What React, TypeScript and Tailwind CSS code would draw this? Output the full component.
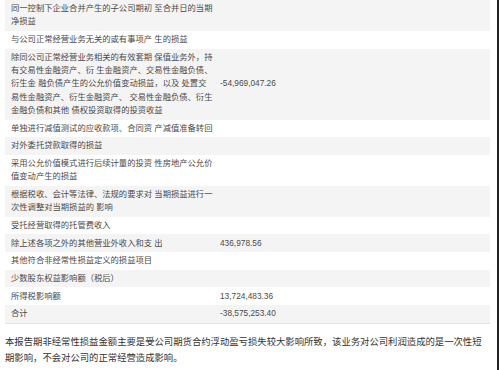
import React from "react";

type Row = { lines: string[]; value?: string; gray: boolean };

const rows: Row[] = [
  { lines: ["同一控制下企业合并产生的子公司期初 至合并日的当期", "净损益"], gray: true },
  { lines: ["与公司正常经营业务无关的或有事项产 生的损益"], gray: false },
  {
    lines: [
      "除同公司正常经营业务相关的有效套期 保值业务外，持",
      "有交易性金融资产、衍 生金融资产、交易性金融负债、",
      "衍生金 融负债产生的公允价值变动损益，以及 处置交",
      "易性金融资产、衍生金融资产、 交易性金融负债、衍生",
      "金融负债和其他 债权投资取得的投资收益",
    ],
    value: "-54,969,047.26",
    gray: true,
  },
  { lines: ["单独进行减值测试的应收款项、合同资 产减值准备转回"], gray: false },
  { lines: ["对外委托贷款取得的损益"], gray: true },
  { lines: ["采用公允价值模式进行后续计量的投资 性房地产公允价", "值变动产生的损益"], gray: false },
  { lines: ["根据税收、会计等法律、法规的要求对 当期损益进行一", "次性调整对当期损益的 影响"], gray: true },
  { lines: ["受托经营取得的托管费收入"], gray: false },
  { lines: ["除上述各项之外的其他营业外收入和支 出"], value: "436,978.56", gray: true },
  { lines: ["其他符合非经常性损益定义的损益项目"], gray: false },
  { lines: ["少数股东权益影响额（税后）"], gray: true },
  { lines: ["所得税影响额"], value: "13,724,483.36", gray: false },
  { lines: ["合计"], value: "-38,575,253.40", gray: true },
];

export default function App() {
  return (
    <div
      className="w-[500px] h-[370px] bg-white flex overflow-hidden"
      style={{ fontFamily: '"Liberation Sans", "Noto Sans CJK SC", sans-serif' }}
    >
      <div className="w-[497px] flex flex-col">
        <div className="ml-[5px] w-[485px] flex flex-col border-b border-[#e6e6e6]">
          {rows.map((r, i) => (
            <div
              key={i}
              className={`grid grid-cols-[215px_1fr] items-center py-[2.2px] text-[8.3px] leading-[13.3px] text-[#4a4a4a] ${
                r.gray ? "bg-[#f4f4f4]" : "bg-white"
              }`}
            >
              <div className="pl-[6px] flex flex-col">
                {r.lines.map((l, j) => (
                  <span key={j} className="whitespace-pre">
                    {l}
                  </span>
                ))}
              </div>
              <div className="whitespace-pre">{r.value ?? ""}</div>
            </div>
          ))}
        </div>
        <div className="ml-[5px] mt-[10px] text-[9.35px] leading-[16px] text-[#333]">
          <div className="whitespace-pre">
            本报告期非经常性损益金额主要是受公司期货合约浮动盈亏损失较大影响所致，该业务对公司利润造成的是一次性短
          </div>
          <div className="whitespace-pre">期影响，不会对公司的正常经营造成影响。</div>
        </div>
      </div>
      <div className="w-[2px] h-full bg-[#222]" />
    </div>
  );
}
